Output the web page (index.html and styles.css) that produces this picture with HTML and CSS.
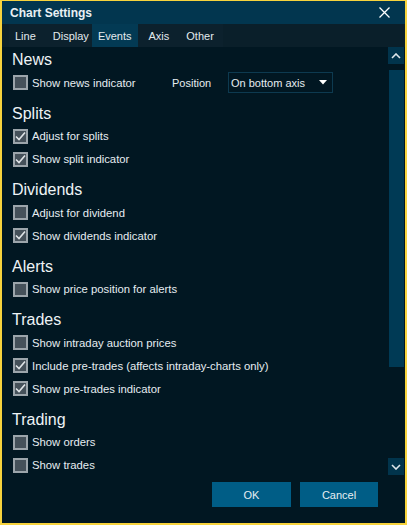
FILE: index.html
```html
<!DOCTYPE html>
<html>
<head>
<meta charset="utf-8">
<link rel="stylesheet" href="styles.css">
</head>
<body>
<div class="window">
  <div class="titlebar">
    <span class="title">Chart Settings</span>
    <svg class="close" width="11" height="11" viewBox="0 0 11 11"><path d="M0.5 0.5 L10.5 10.5 M10.5 0.5 L0.5 10.5" stroke="#ffffff" stroke-width="1.3"/></svg>
  </div>
  <div class="tabbar">
    <div class="tabs">
      <span class="tab">Line</span>
      <span class="tab">Display</span>
      <span class="tab active">Events</span>
      <span class="tab">Axis</span>
      <span class="tab">Other</span>
    </div>
  </div>
  <div class="main">
    <div class="content">
      <div class="section">
        <div class="heading">News</div>
        <div class="row">
          <label class="check news-check"><span class="box"></span>Show news indicator</label>
          <span class="pos-label">Position</span>
          <div class="select"><span>On bottom axis</span><svg width="8" height="5" viewBox="0 0 8 5"><path d="M0 0 H8 L4 4.5 Z" fill="#ffffff"/></svg></div>
        </div>
      </div>
      <div class="section">
        <div class="heading">Splits</div>
        <div class="row"><label class="check"><span class="box checked"><svg width="11" height="11" viewBox="0 0 11 11"><path d="M1 5.5 L4 8.5 L10 1.5" fill="none" stroke="#dfe4e7" stroke-width="1.6"/></svg></span>Adjust for splits</label></div>
        <div class="row"><label class="check"><span class="box checked"><svg width="11" height="11" viewBox="0 0 11 11"><path d="M1 5.5 L4 8.5 L10 1.5" fill="none" stroke="#dfe4e7" stroke-width="1.6"/></svg></span>Show split indicator</label></div>
      </div>
      <div class="section">
        <div class="heading">Dividends</div>
        <div class="row"><label class="check"><span class="box"></span>Adjust for dividend</label></div>
        <div class="row"><label class="check"><span class="box checked"><svg width="11" height="11" viewBox="0 0 11 11"><path d="M1 5.5 L4 8.5 L10 1.5" fill="none" stroke="#dfe4e7" stroke-width="1.6"/></svg></span>Show dividends indicator</label></div>
      </div>
      <div class="section">
        <div class="heading">Alerts</div>
        <div class="row"><label class="check"><span class="box"></span>Show price position for alerts</label></div>
      </div>
      <div class="section">
        <div class="heading">Trades</div>
        <div class="row"><label class="check"><span class="box"></span>Show intraday auction prices</label></div>
        <div class="row"><label class="check"><span class="box checked"><svg width="11" height="11" viewBox="0 0 11 11"><path d="M1 5.5 L4 8.5 L10 1.5" fill="none" stroke="#dfe4e7" stroke-width="1.6"/></svg></span>Include pre-trades (affects intraday-charts only)</label></div>
        <div class="row"><label class="check"><span class="box checked"><svg width="11" height="11" viewBox="0 0 11 11"><path d="M1 5.5 L4 8.5 L10 1.5" fill="none" stroke="#dfe4e7" stroke-width="1.6"/></svg></span>Show pre-trades indicator</label></div>
      </div>
      <div class="section">
        <div class="heading">Trading</div>
        <div class="row"><label class="check"><span class="box"></span>Show orders</label></div>
        <div class="row"><label class="check"><span class="box"></span>Show trades</label></div>
      </div>
    </div>
    <div class="scrollbar">
      <div class="sb-btn"><svg width="10" height="6" viewBox="0 0 10 6"><path d="M1 5 L5 1 L9 5" fill="none" stroke="#dfe6ea" stroke-width="1.6"/></svg></div>
      <div class="sb-track"><div class="sb-thumb"></div></div>
      <div class="sb-btn"><svg width="10" height="6" viewBox="0 0 10 6"><path d="M1 1 L5 5 L9 1" fill="none" stroke="#dfe6ea" stroke-width="1.6"/></svg></div>
    </div>
  </div>
  <div class="footer">
    <button class="btn">OK</button>
    <button class="btn">Cancel</button>
  </div>
</div>
</body>
</html>
```

FILE: styles.css
```css
html, body {
  margin: 0;
  padding: 0;
  background: #f7d33d;
}
body {
  font-family: "Liberation Sans", Arial, sans-serif;
  font-size: 11px;
  color: #e6edf1;
}
.window {
  width: 407px;
  height: 525px;
  box-sizing: border-box;
  border: 2px solid #f7d33d;
  border-top-width: 1px;
  background: #011722;
  display: flex;
  flex-direction: column;
}
.titlebar {
  height: 23px;
  background: #02364f;
  display: flex;
  align-items: center;
  justify-content: space-between;
  padding: 0 15px 0 8px;
}
.title {
  font-weight: bold;
  font-size: 12px;
  color: #e9f0f3;
}
.close {
  display: block;
}
.tabbar {
  height: 23px;
  background: #0a1f2a;
  display: flex;
  padding-left: 7px;
}
.tabs {
  display: flex;
  background: #0c212d;
  padding-right: 3px;
}
.tab {
  display: flex;
  align-items: center;
  padding: 0 6px;
  margin-right: 5px;
  color: #e3eaee;
}
.tab:last-child {
  margin-right: 0;
}
.tab.active {
  background: #033a54;
  margin-left: -8px;
}
.main {
  flex: 1;
  display: flex;
  min-height: 0;
}
.content {
  flex: 1;
  overflow: hidden;
  padding: 2px 0 0 10px;
}
.section {
  margin-bottom: 8.5px;
}
.heading {
  height: 22px;
  line-height: 22px;
  font-size: 16px;
  color: #eef3f6;
}
.row {
  height: 23px;
  display: flex;
  align-items: center;
}
.check {
  display: flex;
  align-items: center;
  padding-left: 1px;
  font-size: 11.3px;
}
.news-check {
  width: 159px;
}
.box {
  width: 15px;
  height: 15px;
  box-sizing: border-box;
  border: 2px solid #9ca5ab;
  background: #45515a;
  margin-right: 4px;
  display: flex;
  align-items: center;
  justify-content: center;
}
.box svg {
  display: block;
}
.pos-label {
  width: 56px;
}
.select {
  width: 105px;
  height: 21px;
  box-sizing: border-box;
  border: 1px solid #0d3a50;
  display: flex;
  align-items: center;
  justify-content: space-between;
  padding: 0 5px 0 2px;
}
.select svg {
  display: block;
}
.scrollbar {
  width: 16px;
  margin-right: 1px;
  display: flex;
  flex-direction: column;
}
.sb-btn {
  height: 17px;
  background: #01344c;
  display: flex;
  align-items: center;
  justify-content: center;
}
.sb-track {
  flex: 1;
  padding: 6px 0 91px 1px;
  display: flex;
}
.sb-thumb {
  flex: 1;
  background: #003a55;
}
.footer {
  height: 48px;
  box-sizing: border-box;
  padding: 7px 27px 0 0;
  display: flex;
  justify-content: flex-end;
  align-items: flex-start;
  gap: 9px;
}
.btn {
  height: 25px;
  width: 79px;
  border: none;
  background: #005d86;
  color: #e6eef2;
  font-family: "Liberation Sans", Arial, sans-serif;
  font-size: 11px;
  padding: 0;
}
.btn + .btn {
  width: 78px;
}
```
